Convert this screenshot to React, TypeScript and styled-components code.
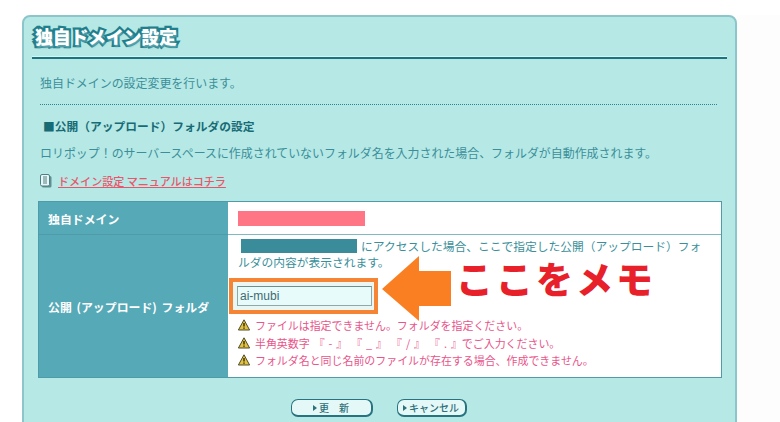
import React from 'react'
import styled, { createGlobalStyle } from 'styled-components'

const Global = createGlobalStyle`
  html, body { margin: 0; padding: 0; background: #fff; overflow: hidden; }
  body { font-family: "Noto Sans CJK JP", "Liberation Sans", sans-serif; width: 780px; height: 422px; }
`

const Stage = styled.div`
  display: flex;
  width: 780px;
  height: 422px;
  padding: 15px 0 0 22px;
  box-sizing: border-box;
  overflow: hidden;
  position: relative;
`
const Panel = styled.div`
  width: 715px;
  height: 430px;
  flex: none;
  box-sizing: border-box;
  background: #b6e8e5;
  border: 2px solid #8cc5ca;
  border-radius: 8px;
  padding: 8px 8px 0 8px;
`
const Side = styled.div`
  flex: 1;
  background: #fdfdfe;
`
const Title = styled.h1`
  margin: 0;
  height: 32px;
  padding-left: 3px;
  font-size: 18px;
  line-height: 23px;
  font-weight: 900;
  letter-spacing: -0.3px;
  color: #fff;
  -webkit-text-stroke: 4.5px #1f7f8c;
  paint-order: stroke fill;
  text-shadow: 1px 2px 2px #5fa9b2;
`
const Rule = styled.div`
  height: 2px;
  background: #1b7480;
  box-shadow: 0 -1px 0 #d5f7f4;
`
const Body = styled.div`
  padding: 15px 10px 0 8px;
`
const Line = styled.p`
  margin: 0;
  font-size: 11.95px;
  line-height: 18px;
  color: #3a8f9a;
  white-space: nowrap;
`
const Dots = styled.div`
  margin-top: 12px;
  border-top: 1px dotted #2f8290;
`
const Heading = styled.h2`
  margin: 12px 0 0;
  padding-left: 3px;
  font-size: 11.75px;
  line-height: 18px;
  font-weight: 700;
  color: #176b75;
  white-space: nowrap;
`
const Para = styled(Line)`
  margin-top: 9px;
`
const Manual = styled.div`
  display: flex;
  align-items: center;
  gap: 6px;
  margin-top: 10px;
  height: 18px;
`
const ManualLink = styled.a`
  font-size: 11.05px;
  font-weight: 500;
  line-height: 18px;
  color: #e8566a;
  text-decoration: underline;
  white-space: nowrap;
`
const Table = styled.div`
  display: grid;
  grid-template-columns: 189px 1fr;
  grid-template-rows: 33px 142px;
  width: 684px;
  margin: 11px 0 0 -2px;
  box-sizing: border-box;
  border: 1px solid #4f9ba9;
  background: #fff;
`
const Label = styled.div<{ $last?: boolean }>`
  display: flex;
  align-items: center;
  padding-left: 9px;
  background: #56a9b7;
  color: #fff;
  font-size: 11.9px;
  font-weight: 700;
  word-spacing: 2px;
  white-space: nowrap;
  border-bottom: ${p => (p.$last ? 'none' : '1px solid #4f9ba9')};
`
const DomainCell = styled.div`
  display: flex;
  align-items: center;
  padding-left: 10px;
  border-bottom: 1px solid #7fb9c2;
`
const Masked = styled.span<{ $w: number; $h: number; $c: string }>`
  display: inline-block;
  flex: none;
  width: ${p => p.$w}px;
  height: ${p => p.$h}px;
  background: ${p => p.$c};
`
const FolderCell = styled.div`
  display: flex;
  flex-direction: column;
  padding: 3px 0 0 10px;
`
const Intro = styled.div`
  font-size: 11.75px;
  line-height: 18px;
  color: #3a8f9a;
  white-space: nowrap;
`
const IntroTop = styled.div`
  display: flex;
  align-items: center;
  gap: 4px;
  padding-left: 3px;
  height: 15px;
`
const FieldRow = styled.div`
  margin: 7px 0 2px -9px;
`
const Highlight = styled.div`
  display: flex;
  align-items: center;
  width: 149px;
  height: 36px;
  box-sizing: border-box;
  border: 4px solid #f58434;
  background: #eaf6f3;
  padding-left: 4px;
`
const Field = styled.input`
  width: 135px;
  height: 20px;
  box-sizing: border-box;
  border: 1px solid #8fa9a9;
  border-top-color: #6f8d8d;
  background: #e8fbfb;
  padding: 0 2px;
  font-family: "Liberation Sans", sans-serif;
  font-size: 12px;
  color: #3d6b72;
  outline: none;
`
const Notes = styled.ul`
  list-style: none;
  margin: 0;
  padding: 0;
`
const Note = styled.li`
  display: flex;
  align-items: center;
  gap: 5px;
  height: 17.7px;
  font-size: 10.95px;
  word-spacing: 1.5px;
  color: #e8558a;
  white-space: pre;
`
const Actions = styled.div`
  display: flex;
  justify-content: center;
  gap: 24px;
  margin: 21px 0 0 0;
`
const Btn = styled.button<{ $w: number }>`
  display: flex;
  align-items: center;
  justify-content: center;
  width: ${p => p.$w}px;
  height: 18px;
  padding: 0;
  box-sizing: border-box;
  background: #e4f8f8;
  border: 1px solid #27737f;
  border-right-width: 2px;
  border-bottom-width: 2px;
  border-radius: 7px;
  font-family: inherit;
  font-size: 10px;
  font-weight: 500;
  color: #2e6f79;
  white-space: pre;
`
const Caret = styled.span`
  display: inline-block;
  width: 0;
  height: 0;
  margin-right: 2px;
  border-left: 4px solid #2e6f79;
  border-top: 3px solid transparent;
  border-bottom: 3px solid transparent;
`
const Arrow = styled.svg`
  position: absolute;
  left: 382px;
  top: 256px;
`
const Memo = styled.div`
  position: absolute;
  left: 456px;
  top: 253px;
  font-size: 37px;
  line-height: 50px;
  font-weight: 900;
  letter-spacing: 3px;
  color: #e8202a;
  white-space: nowrap;
`

function BookIcon() {
  return (
    <svg width="12" height="14" viewBox="0 0 12 14">
      <rect x="2" y="2" width="9.5" height="11.5" rx="1.5" fill="#5f8f93" />
      <rect x="0.5" y="0.5" width="9" height="11.5" rx="1.5" fill="#eaf6f5" stroke="#4d7f84" />
      <path d="M3 3h4M3 5h4M3 7h4M3 9h4" stroke="#4d7f84" strokeWidth="1" />
    </svg>
  )
}

function WarnIcon() {
  return (
    <svg width="12" height="12" viewBox="0 0 12 12">
      <path d="M6 .8 11.6 11H.4z" fill="#e3c23e" stroke="#4e4a2a" strokeWidth="1" strokeLinejoin="round" />
      <path d="M6 4v3.6M6 8.6v1.2" stroke="#2d2a18" strokeWidth="1.4" />
    </svg>
  )
}

export default function App() {
  return (
    <>
      <Global />
      <Stage>
        <Panel>
          <Title>独自ドメイン設定</Title>
          <Rule />
          <Body>
            <Line>独自ドメインの設定変更を行います。</Line>
            <Dots />
            <Heading>■公開（アップロード）フォルダの設定</Heading>
            <Para>ロリポップ！のサーバースペースに作成されていないフォルダ名を入力された場合、フォルダが自動作成されます。</Para>
            <Manual>
              <BookIcon />
              <ManualLink>ドメイン設定 マニュアルはコチラ</ManualLink>
            </Manual>
            <Table>
              <Label>独自ドメイン</Label>
              <DomainCell>
                <Masked $w={127} $h={15} $c="#ff7585" />
              </DomainCell>
              <Label $last>公開 (アップロード) フォルダ</Label>
              <FolderCell>
                <Intro>
                  <IntroTop>
                    <Masked $w={116} $h={14} $c="#3a8c9a" />
                    <span>にアクセスした場合、ここで指定した公開（アップロード）フォ</span>
                  </IntroTop>
                  ルダの内容が表示されます。
                </Intro>
                <FieldRow>
                  <Highlight>
                    <Field defaultValue="ai-mubi" />
                  </Highlight>
                </FieldRow>
                <Notes>
                  <Note><WarnIcon />ファイルは指定できません。フォルダを指定ください。</Note>
                  <Note><WarnIcon />半角英数字 『 - 』 『 _ 』 『 / 』 『 . 』でご入力ください。</Note>
                  <Note><WarnIcon />フォルダ名と同じ名前のファイルが存在する場合、作成できません。</Note>
                </Notes>
              </FolderCell>
            </Table>
            <Actions>
              <Btn $w={82}><Caret />更　新</Btn>
              <Btn $w={70}><Caret />キャンセル</Btn>
            </Actions>
          </Body>
        </Panel>
        <Side />
        <Arrow width="70" height="66" viewBox="0 0 70 66">
          <path d="M0 33 37 0V15H69V50H37V65Z" fill="#f97f22" />
        </Arrow>
        <Memo>ここをメモ</Memo>
      </Stage>
    </>
  )
}
